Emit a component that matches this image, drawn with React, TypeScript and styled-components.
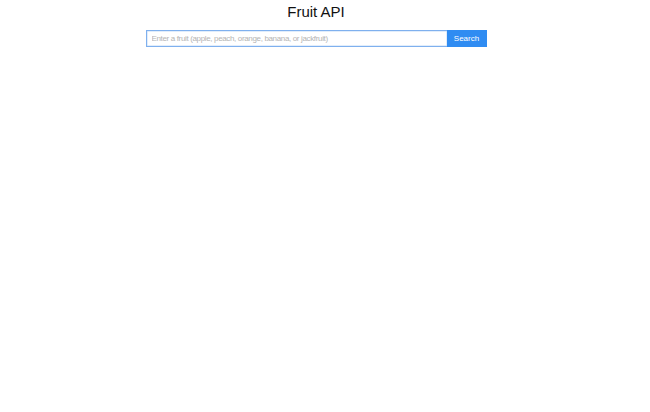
import React from 'react';
import styled, { createGlobalStyle } from 'styled-components';

const GlobalStyle = createGlobalStyle`
  body {
    margin: 0;
    background: #ffffff;
    font-family: 'Liberation Sans', Arial, sans-serif;
  }
`;

const Page = styled.div`
  width: 632px;
  display: flex;
  flex-direction: column;
  align-items: center;
  padding-top: 3px;
`;

const Title = styled.h1`
  margin: 0;
  font-size: 15px;
  font-weight: 400;
  color: #111;
  line-height: 18px;
`;

const SearchForm = styled.form`
  display: flex;
  margin-top: 9px;
  width: 341px;
  height: 17px;
`;

const Input = styled.input`
  flex: 1;
  min-width: 0;
  height: 17px;
  box-sizing: border-box;
  border: 1px solid #7fb0ee;
  border-right: none;
  padding: 0 5px;
  font-family: 'Liberation Sans', Arial, sans-serif;
  font-size: 8px;
  letter-spacing: -0.35px;
  color: #333;
  outline: none;
  box-shadow: inset 0 0 0 0.5px #c4dbf7;

  &::placeholder {
    color: #b4b4b4;
  }
`;

const Button = styled.button`
  width: 40px;
  height: 17px;
  border: none;
  background: #2f8cf2;
  color: #fff;
  font-family: 'Liberation Sans', Arial, sans-serif;
  font-size: 8px;
  padding: 0;
`;

export default function App() {
  return (
    <>
      <GlobalStyle />
      <Page>
        <Title>Fruit API</Title>
        <SearchForm onSubmit={(e) => e.preventDefault()}>
          <Input placeholder="Enter a fruit (apple, peach, orange, banana, or jackfruit)" />
          <Button type="submit">Search</Button>
        </SearchForm>
      </Page>
    </>
  );
}
